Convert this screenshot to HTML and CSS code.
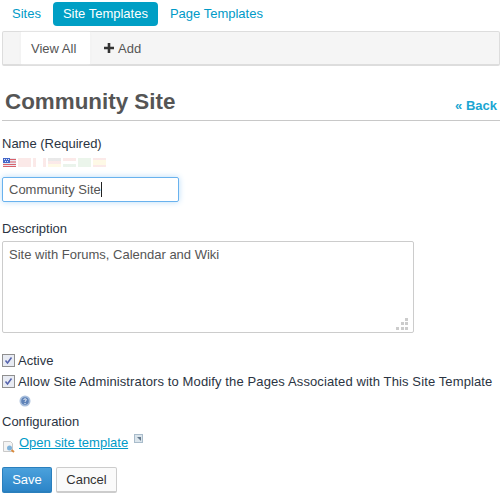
FILE: index.html
```html
<!DOCTYPE html>
<html lang="en">
<head>
    <meta charset="UTF-8">
    <title>Community Site</title>
    <link rel="stylesheet" href="styles.css">
</head>
<body>
    <ul class="tabs">
        <li><a class="tab">Sites</a></li>
        <li><a class="tab tab-active">Site Templates</a></li>
        <li><a class="tab">Page Templates</a></li>
    </ul>

    <div class="toolbar">
        <a class="tool tool-active">View All</a>
        <a class="tool"><svg class="plus" width="10" height="10" viewBox="0 0 10 10"><path d="M3.7 0h2.6v3.7H10v2.6H6.3V10H3.7V6.3H0V3.7h3.7z" fill="#333"/></svg>Add</a>
    </div>

    <div class="header">
        <h1 class="title">Community Site</h1>
        <a class="back">« Back</a>
    </div>

    <form class="form">
        <label class="label">Name (Required)</label>
        <div class="flags">
            <svg class="flag" width="13" height="9" viewBox="0 0 13 9">
                <rect width="13" height="9" fill="#e8e8f0"/>
                <path d="M0 1h13v1H0zM0 3.500h13v1H0zM0 6h13v1H0zM0 8h13v1H0z" fill="#d9616a"/>
                <rect width="7" height="5" fill="#4668c8"/>
                <path d="M1 1h1v1H1zM3 1h1v1H3zM5 1h1v1H5zM2 3h1v1H2zM4 3h1v1H4z" fill="#dfe6fa"/>
            </svg>
            <span class="flag flag-faded flag-cn"></span>
            <span class="flag flag-faded flag-ca"></span>
            <span class="flag flag-faded flag-de"></span>
            <span class="flag flag-faded flag-hu"></span>
            <span class="flag flag-faded flag-br"></span>
            <span class="flag flag-faded flag-es"></span>
        </div>
        <div class="name-box"><span class="name-text">Community Site</span><span class="caret"></span></div>

        <label class="label label-desc">Description</label>
        <div class="desc-box">
            Site with Forums, Calendar and Wiki
            <svg class="grip" width="12" height="12" viewBox="0 0 12 12">
                <path d="M9 0h3v3H9zM5 4h3v3H5zM9 4h3v3H9zM0 9h3v3H0zM5 9h3v3H5zM9 9h3v3H9z" fill="#ccc"/>
            </svg>
        </div>

        <div class="check-row check-first">
            <svg class="check" width="13" height="13" viewBox="0 0 13 13">
                <rect x=".5" y=".5" width="12" height="12" fill="#e8ebf3" stroke="#8f8f8f"/>
                <path d="M3.500 6.500l2 2.500L9.500 3.500" fill="none" stroke="#5563ad" stroke-width="1.500"/>
            </svg>
            <span>Active</span>
        </div>
        <div class="check-row">
            <svg class="check" width="13" height="13" viewBox="0 0 13 13">
                <rect x=".5" y=".5" width="12" height="12" fill="#e8ebf3" stroke="#8f8f8f"/>
                <path d="M3.500 6.500l2 2.500L9.500 3.500" fill="none" stroke="#5563ad" stroke-width="1.500"/>
            </svg>
            <span class="check-long">Allow Site Administrators to Modify the Pages Associated with This Site Template</span>
        </div>
        <svg class="help" width="12" height="12" viewBox="0 0 12 12">
            <circle cx="6" cy="6" r="5.500" fill="#a9bfdc"/>
            <circle cx="6" cy="6" r="3.800" fill="#5f83b8"/>
            <path d="M4.700 4.800c.2-1.300 2.600-1.300 2.600 0 0 1-1.300 1-1.300 2M6 8v1" fill="none" stroke="#fff" stroke-width="1"/>
        </svg>

        <div class="label label-config">Configuration</div>
        <div class="open-row">
            <svg class="doc" width="14" height="14" viewBox="0 0 14 14">
                <path d="M1.500 2.500h7l2 2v8h-9z" fill="#f4f4f4" stroke="#c9c9c9"/>
                <circle cx="7.500" cy="9" r="2.500" fill="#7fb2da"/>
                <path d="M9.500 11l2.500 2" stroke="#d98a3c" stroke-width="2"/>
            </svg>
            <a class="open-link">Open site template</a>
            <svg class="ext" width="9" height="9" viewBox="0 0 9 9">
                <rect width="9" height="9" fill="#a9bccb"/>
                <rect x="1" y="1" width="7" height="7" fill="#dbe5ec"/>
                <path d="M3 3h4v4z" fill="#64798c"/>
            </svg>
        </div>

        <div class="buttons">
            <button type="button" class="btn btn-primary">Save</button>
            <button type="button" class="btn btn-cancel">Cancel</button>
        </div>
    </form>
</body>
</html>
```

FILE: styles.css
```css
* {
    box-sizing: border-box;
}
body {
    margin: 0;
    padding: 2px 4px 0 2px;
    font-family: "Liberation Sans", Arial, sans-serif;
    font-size: 13px;
    color: #34404f;
    background: #fff;
}
.tabs {
    display: flex;
    list-style: none;
    margin: 0;
    padding: 0;
    gap: 2px;
}
.tab {
    display: block;
    padding: 3px 10px;
    height: 24px;
    line-height: 18px;
    border-radius: 4px;
    color: #009ac7;
}
.tab-active {
    background: #009fc5;
    color: #fff;
}
.toolbar {
    display: flex;
    height: 35px;
    margin-top: 5px;
    padding-left: 18px;
    background: #f5f5f5;
    border: 1px solid #ddd;
    border-bottom-width: 2px;
    border-radius: 2px;
}
.tool {
    display: flex;
    align-items: center;
    padding: 0 11px;
    color: #555;
}
.tool-active {
    background: #fff;
    width: 69px;
    padding: 0 0 0 10px;
    box-shadow: 0 0 3px #eee;
}
.plus {
    margin: 0 4px 0 3px;
}
.header {
    display: flex;
    justify-content: space-between;
    align-items: flex-end;
    height: 55px;
    padding: 0 3px 5px 3px;
    border-bottom: 1px solid #c8c8c8;
}
.title {
    margin: 0;
    font-size: 22.400px;
    line-height: 26px;
    font-weight: bold;
    color: #555;
}
.back {
    margin-bottom: 2px;
    font-weight: bold;
    color: #1aa6d2;
}
.label {
    display: block;
    line-height: 18px;
    color: #2b3442;
}
.form {
    padding-top: 14px;
}
.flags {
    display: flex;
    gap: 2px;
    height: 9px;
    margin: 5px 0 0 1px;
}
.flag {
    display: block;
    width: 13px;
    height: 9px;
}
.flag-faded {
    opacity: .1;
}
.flag-cn { background: #d8281f; }
.flag-ca { background: linear-gradient(to right, #d8281f 25%, #fff 25%, #fff 75%, #d8281f 75%); }
.flag-de { background: linear-gradient(#222 33%, #d8281f 33%, #d8281f 66%, #f5c400 66%); }
.flag-hu { background: linear-gradient(#d8281f 33%, #fff 33%, #fff 66%, #2f8a3e 66%); }
.flag-br { background: #3a9a3e; }
.flag-es { background: linear-gradient(#d8281f 25%, #f5c400 25%, #f5c400 75%, #d8281f 75%); }
.name-box {
    display: flex;
    align-items: center;
    width: 177px;
    height: 25px;
    margin-top: 10px;
    padding-left: 6px;
    border: 1px solid #69b2ee;
    border-radius: 2px;
    box-shadow: 0 0 6px #b9dcf8;
    color: #555;
}
.caret {
    width: 1px;
    height: 15px;
    background: #222;
}
.label-desc {
    margin-top: 18px;
}
.desc-box {
    position: relative;
    width: 412px;
    height: 92px;
    margin-top: 3px;
    padding: 4px 6px;
    line-height: 18px;
    border: 1px solid #ccc;
    border-radius: 2px;
    color: #555;
}
.grip {
    position: absolute;
    right: 5px;
    bottom: 2px;
    width: 12px;
    height: 12px;
}
.check-row {
    display: flex;
    align-items: center;
    gap: 3px;
    height: 18px;
    margin-top: 3px;
    white-space: nowrap;
    color: #2b3442;
}
.check-first {
    margin-top: 18px;
}
.check {
    flex-shrink: 0;
}
.check-long {
    letter-spacing: .12px;
}
.help {
    display: block;
    margin: 5px 0 0 17px;
}
.label-config {
    margin-top: 6px;
}
.open-row {
    display: flex;
    align-items: flex-start;
    margin-top: 3px;
    height: 22px;
}
.doc {
    margin-top: 5px;
    margin-right: 3px;
}
.open-link {
    color: #009ac7;
    text-decoration: underline;
    line-height: 18px;
}
.ext {
    margin: 0 0 0 6px;
}
.buttons {
    display: flex;
    gap: 4px;
    margin-top: 11px;
}
.btn {
    height: 26px;
    padding: 0 9px;
    font-family: inherit;
    font-size: 13px;
    background: #fafafa;
    border: 1px solid #ccc;
    border-bottom-width: 2px;
    border-radius: 2px;
    color: #333;
}
.btn-cancel {
    width: 61px;
    padding: 0;
}
.btn-primary {
    width: 50px;
    padding: 0;
    background: linear-gradient(#4ba1dc, #2c85c8);
    border-color: #2a7fbd;
    color: #fff;
}
```
